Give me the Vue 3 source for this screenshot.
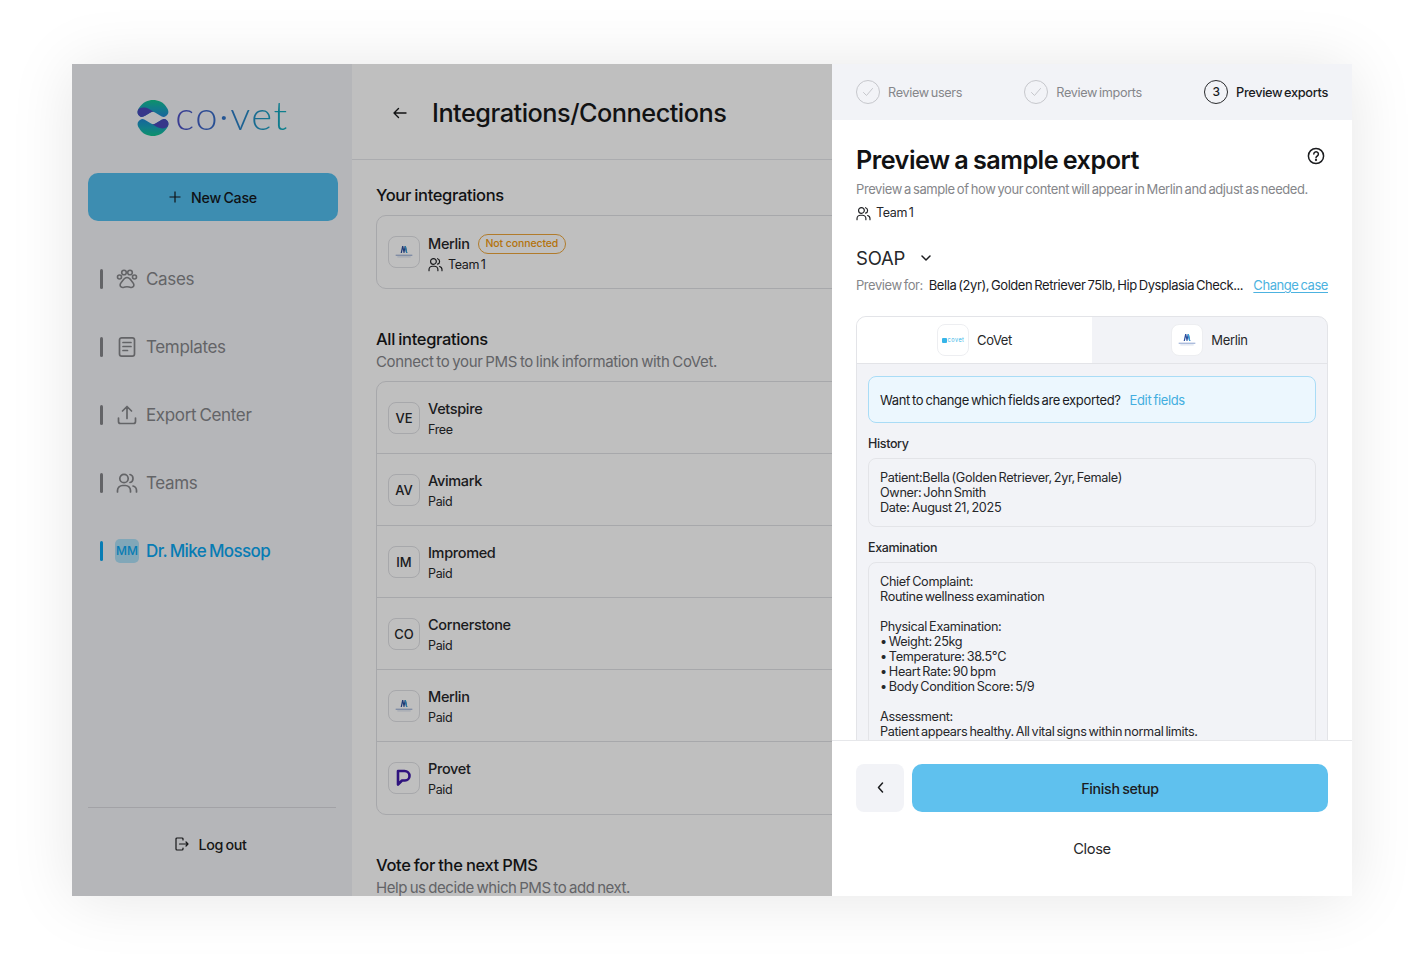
<script setup>
const nav = [
  { key: 'paw', label: 'Cases' },
  { key: 'doc', label: 'Templates' },
  { key: 'upload', label: 'Export Center' },
  { key: 'users', label: 'Teams' },
]
const rows = [
  { code: 'VE', name: 'Vetspire', plan: 'Free' },
  { code: 'AV', name: 'Avimark', plan: 'Paid' },
  { code: 'IM', name: 'Impromed', plan: 'Paid' },
  { code: 'CO', name: 'Cornerstone', plan: 'Paid' },
  { logo: 'merlin', name: 'Merlin', plan: 'Paid' },
  { logo: 'provet', name: 'Provet', plan: 'Paid' },
]
const lines1 = ['Patient:Bella (Golden Retriever, 2yr, Female)', 'Owner: John Smith', 'Date: August 21, 2025']
const lines2 = ['Chief Complaint:', 'Routine wellness examination', '\u00a0', 'Physical Examination:', '• Weight: 25kg', '• Temperature: 38.5°C', '• Heart Rate: 90 bpm', '• Body Condition Score: 5/9', '\u00a0', 'Assessment:', 'Patient appears healthy. All vital signs within normal limits.']
</script>

<template>
  <div class="page">
    <div class="frame">
      <aside class="side">
        <div class="logo">
          <svg width="32" height="36" viewBox="0 0 32 36">
            <defs>
              <linearGradient id="gTop" x1="0" y1="0" x2="0" y2="1">
                <stop offset="0" stop-color="#12c38e" />
                <stop offset="0.5" stop-color="#18a6b8" />
                <stop offset="1" stop-color="#1f86d0" />
              </linearGradient>
              <linearGradient id="gBot" x1="0" y1="1" x2="0" y2="0">
                <stop offset="0" stop-color="#12c38e" />
                <stop offset="0.5" stop-color="#18a6b8" />
                <stop offset="1" stop-color="#1f86d0" />
              </linearGradient>
            </defs>
            <path fill="url(#gTop)" d="M2 8C6 2 11 0 16 0C21 0 27 2 30 8C32 11 32 14 29 16C27 17.5 25 17 23 15.5L18 12.5C16.5 11.6 15 11.6 13.5 12.5L8.5 15.5C6 17 4 17.5 2.500 16C0 14 0 11 2 8Z" />
            <path fill="#4a48b8" d="M1 10C3 7 8 7 12 9L17 12C15.600 11.700 14.800 11.700 13.500 12.500L8.500 15.500C6 17 4 17.500 2.500 16C0.500 14.500 0 12 1 10Z" />
            <path fill="url(#gBot)" d="M30 28C26 34 21 36 16 36C11 36 5 34 2 28C0 25 0 22 3 20C5 18.500 7 19 9 20.500L14 23.500C15.500 24.400 17 24.400 18.500 23.500L23.500 20.500C26 19 28 18.500 29.500 20C32 22 32 25 30 28Z" />
            <path fill="#4a48b8" d="M31 26C29 29 24 29 20 27L15 24C16.400 24.300 17.200 24.300 18.500 23.500L23.500 20.500C26 19 28 18.500 29.500 20C31.500 21.500 32 24 31 26Z" />
          </svg>
          <span class="logo-text">co·vet</span>
        </div>
        <button class="new-case">
          <svg width="12" height="12" viewBox="0 0 12 12" fill="none" stroke="#14171c" stroke-width="1.200"><path d="M6 .5v11M.5 6h11" /></svg>
          <span>New Case</span>
        </button>
        <nav class="nav">
          <div v-for="item in nav" :key="item.key" class="nav-item">
            <i class="bar"></i>
            <svg v-if="item.key === 'paw'" class="nav-icon" viewBox="0 0 22 22" fill="none" stroke="currentColor" stroke-width="1.600">
              <circle cx="3.500" cy="9" r="2" /><circle cx="8" cy="4.500" r="2.300" /><circle cx="14" cy="4.500" r="2.300" /><circle cx="18.500" cy="9" r="2" />
              <path d="M11 9.500c-2.200 0-3.400 1.600-4.500 3.400-1 1.600-2.400 2.300-2.400 4 0 1.800 1.500 2.900 3.200 2.600 1.400-.2 2.400-.8 3.700-.8s2.300.6 3.700.8c1.700.3 3.200-.8 3.200-2.600 0-1.700-1.400-2.400-2.400-4-1.100-1.800-2.300-3.400-4.500-3.400z" />
            </svg>
            <svg v-else-if="item.key === 'doc'" class="nav-icon" viewBox="0 0 22 22" fill="none" stroke="currentColor" stroke-width="1.700" stroke-linecap="round">
              <rect x="3.500" y="1.800" width="15" height="18.400" rx="2.200" /><path d="M7 6.500h8M7 10.500h8M7 14.500h4.500" />
            </svg>
            <svg v-else-if="item.key === 'upload'" class="nav-icon" viewBox="0 0 22 22" fill="none" stroke="currentColor" stroke-width="1.700" stroke-linecap="round" stroke-linejoin="round">
              <path d="M11 14.500V2.500M6.500 7 11 2.500 15.500 7M2.500 14v3.500a2 2 0 0 0 2 2h13a2 2 0 0 0 2-2V14" />
            </svg>
            <svg v-else class="nav-icon" viewBox="0 0 22 22" fill="none" stroke="currentColor" stroke-width="1.700" stroke-linecap="round">
              <circle cx="8" cy="6.500" r="4.200" /><path d="M1.500 20v-1.500c0-3 2.500-5 5-5h3c2.500 0 5 2 5 5V20M14 2.500c2 .5 3 2.200 3 4s-1 3.500-3 4M17 14c2.200.6 3.500 2.400 3.500 4.500V20" />
            </svg>
            <span>{{ item.label }}</span>
          </div>
          <div class="nav-item active">
            <i class="bar"></i>
            <span class="avatar">MM</span>
            <span>Dr. Mike Mossop</span>
          </div>
        </nav>
        <div class="logout-wrap">
          <div class="logout">
            <svg width="14" height="14" viewBox="0 0 14 14" fill="none" stroke="#1d1e21" stroke-width="1.200" stroke-linecap="round" stroke-linejoin="round">
              <path d="M8 3V2a1 1 0 0 0-1-1H2a1 1 0 0 0-1 1v10a1 1 0 0 0 1 1h5a1 1 0 0 0 1-1v-1M4.500 7h8.500M11 5l2 2-2 2" />
            </svg>
            <span>Log out</span>
          </div>
        </div>
      </aside>

      <main class="main">
        <header class="main-head">
          <svg width="14" height="12" viewBox="0 0 14 12" fill="none" stroke="#17181a" stroke-width="1.400" stroke-linecap="round" stroke-linejoin="round"><path d="M13 6H1M5.500 1.500 1 6l4.500 4.500" /></svg>
          <h1>Integrations/Connections</h1>
        </header>
        <div class="main-body">
          <h2>Your integrations</h2>
          <div class="card your">
            <span class="tile">
              <svg class="merlin" viewBox="0 0 18 14"><path fill="#2c4f9e" d="M6 8 7.300 1.500h1.100L9 4.500l.6-3h1.100L12 8h-1.100l-.8-3.800L9.400 8H8.600l-.7-3.800L7.100 8z" /><path fill="#35a4dc" d="M9.600 1.500h1.100L12 8h-1.100z" /><rect x="1.500" y="9.500" width="15" height=".7" fill="#6a88c0" /><rect x="3" y="11.200" width="12" height=".5" fill="#b3c2dc" /></svg>
            </span>
            <div class="your-text">
              <div class="name-line"><span class="name">Merlin</span><span class="pill">Not connected</span></div>
              <div class="team-line">
                <svg width="15" height="15" viewBox="0 0 22 22" fill="none" stroke="#1e1f22" stroke-width="1.700" stroke-linecap="round"><circle cx="8" cy="6.500" r="4.200" /><path d="M1.500 20v-1.500c0-3 2.500-5 5-5h3c2.500 0 5 2 5 5V20M14 2.500c2 .5 3 2.200 3 4s-1 3.500-3 4M17 14c2.200.6 3.500 2.400 3.500 4.500V20" /></svg>
                <span>Team 1</span>
              </div>
            </div>
          </div>

          <h2 class="all">All integrations</h2>
          <p class="desc">Connect to your PMS to link information with CoVet.</p>
          <div class="card list">
            <div v-for="r in rows" :key="r.name" class="row">
              <span class="tile">
                <template v-if="r.code">{{ r.code }}</template>
                <svg v-else-if="r.logo === 'merlin'" class="merlin" viewBox="0 0 18 14"><path fill="#2c4f9e" d="M6 8 7.300 1.500h1.100L9 4.500l.6-3h1.100L12 8h-1.100l-.8-3.800L9.400 8H8.600l-.7-3.800L7.100 8z" /><path fill="#35a4dc" d="M9.600 1.500h1.100L12 8h-1.100z" /><rect x="1.500" y="9.500" width="15" height=".7" fill="#6a88c0" /><rect x="3" y="11.200" width="12" height=".5" fill="#b3c2dc" /></svg>
                <svg v-else width="16" height="18" viewBox="0 0 16 18" fill="none" stroke="#3f1aa8" stroke-width="2.600" stroke-linejoin="round"><path d="M2 15.500V2h6.500a5 5 0 0 1 5 5 4.500 4.500 0 0 1-4.500 4.500H6z" /></svg>
              </span>
              <div class="row-text">
                <div class="name">{{ r.name }}</div>
                <div class="plan">{{ r.plan }}</div>
              </div>
            </div>
          </div>

          <h2 class="vote">Vote for the next PMS</h2>
          <p class="desc help">Help us decide which PMS to add next.</p>
        </div>
      </main>

      <div class="scrim"></div>

      <section class="drawer">
        <div class="steps">
          <div class="step done">
            <svg width="24" height="24" viewBox="0 0 24 24" fill="none" stroke="#c6c7cc"><circle cx="12" cy="12" r="11.500" /><path d="m7.500 12.500 3 3 6-7" stroke-linecap="round" stroke-linejoin="round" /></svg>
            <span>Review users</span>
          </div>
          <div class="step done">
            <svg width="24" height="24" viewBox="0 0 24 24" fill="none" stroke="#c6c7cc"><circle cx="12" cy="12" r="11.500" /><path d="m7.500 12.500 3 3 6-7" stroke-linecap="round" stroke-linejoin="round" /></svg>
            <span>Review imports</span>
          </div>
          <div class="step current">
            <b class="num">3</b>
            <span>Preview exports</span>
          </div>
        </div>

        <div class="content">
          <div class="title-row">
            <h3>Preview a sample export</h3>
            <svg class="help-icon" width="18" height="18" viewBox="0 0 18 18" fill="none" stroke="#1b1c1f" stroke-width="1.500" stroke-linecap="round"><circle cx="9" cy="9" r="7.600" /><path d="M6.800 7a2.300 2.300 0 1 1 3.500 2c-.8.500-1.300.9-1.300 1.800" /><circle cx="9" cy="13" r=".4" /></svg>
          </div>
          <p class="sub">Preview a sample of how your content will appear in Merlin and adjust as needed.</p>
          <div class="team-line small">
            <svg width="15" height="15" viewBox="0 0 22 22" fill="none" stroke="#1e1f22" stroke-width="1.700" stroke-linecap="round"><circle cx="8" cy="6.500" r="4.200" /><path d="M1.500 20v-1.500c0-3 2.500-5 5-5h3c2.500 0 5 2 5 5V20M14 2.500c2 .5 3 2.200 3 4s-1 3.500-3 4M17 14c2.200.6 3.500 2.400 3.500 4.500V20" /></svg>
            <span>Team 1</span>
          </div>
          <div class="soap">
            <span>SOAP</span>
            <svg width="10" height="6" viewBox="0 0 10 6" fill="none" stroke="#1b1c1f" stroke-width="1.500" stroke-linecap="round" stroke-linejoin="round"><path d="m1 1 4 4 4-4" /></svg>
          </div>
          <div class="preview-for">
            <span class="pf-label">Preview for:</span>
            <span class="pf-case">Bella (2yr), Golden Retriever 75lb, Hip Dysplasia Check...</span>
            <a class="change">Change case</a>
          </div>

          <div class="panel">
            <div class="tabs">
              <div class="tab on">
                <span class="tab-logo"><i class="mini-sq"></i><span class="mini-txt">covet</span></span>
                <span>CoVet</span>
              </div>
              <div class="tab">
                <span class="tab-logo">
                  <svg class="merlin" viewBox="0 0 18 14"><path fill="#2c4f9e" d="M6 8 7.300 1.500h1.100L9 4.500l.6-3h1.100L12 8h-1.100l-.8-3.800L9.400 8H8.600l-.7-3.800L7.100 8z" /><path fill="#35a4dc" d="M9.600 1.500h1.100L12 8h-1.100z" /><rect x="1.500" y="9.500" width="15" height=".7" fill="#6a88c0" /><rect x="3" y="11.200" width="12" height=".5" fill="#b3c2dc" /></svg>
                </span>
                <span>Merlin</span>
              </div>
            </div>
            <div class="panel-body">
              <div class="callout">
                <span>Want to change which fields are exported?</span>
                <a>Edit fields</a>
              </div>
              <div class="sec-label">History</div>
              <div class="textbox">
                <div v-for="l in lines1" :key="l">{{ l }}</div>
              </div>
              <div class="sec-label">Examination</div>
              <div class="textbox">
                <div v-for="(l, i) in lines2" :key="i">{{ l }}</div>
              </div>
            </div>
          </div>
        </div>

        <footer class="foot">
          <div class="foot-btns">
            <button class="back">
              <svg width="7" height="11" viewBox="0 0 7 11" fill="none" stroke="#1b1c1f" stroke-width="1.500" stroke-linecap="round" stroke-linejoin="round"><path d="M5.500 1 1.500 5.500l4 4.500" /></svg>
            </button>
            <button class="finish">Finish setup</button>
          </div>
          <div class="close">Close</div>
        </footer>
      </section>
    </div>
  </div>
</template>

<style>
html, body { margin: 0; background: #fff; }
</style>

<style scoped>
.page {
  width: 1416px;
  height: 968px;
  padding: 64px 64px 72px 72px;
  box-sizing: border-box;
  background: #fff;
  font-family: Inter, "Noto Sans", sans-serif;
  letter-spacing: -0.35px;
  word-spacing: -1.2px;
  color: #1b1c1f;
}
.frame {
  position: relative;
  display: flex;
  width: 1280px;
  height: 832px;
  overflow: hidden;
  background: #fff;
}
.page::before {
  content: "";
  position: absolute;
  left: 72px;
  top: 64px;
  width: 1280px;
  height: 832px;
  box-shadow: 0 2px 60px rgba(0, 0, 0, .1);
}
.side {
  flex: 0 0 280px;
  display: flex;
  flex-direction: column;
  padding: 0 14px 0 16px;
  box-sizing: border-box;
  background: #f2f3f7;
}
.logo {
  display: flex;
  align-items: center;
  justify-content: center;
  gap: 6px;
  height: 36px;
  margin: 36px 0 37px 0;
  width: 250px;
}
.logo-text {
  font-family: Lato, sans-serif;
  font-weight: 300;
  font-size: 40px;
  line-height: 36px;
  letter-spacing: 1.500px;
  margin-top: -6px;
  background: linear-gradient(90deg, #504fc4, #2e74c6 45%, #11b0bc);
  -webkit-background-clip: text;
  background-clip: text;
  color: transparent;
}
.new-case {
  display: flex;
  align-items: center;
  justify-content: center;
  gap: 10px;
  width: 250px;
  height: 48px;
  border: 0;
  border-radius: 10px;
  background: #52bdec;
  font: 500 14.200px Inter, sans-serif;
  letter-spacing: -0.250px;
  word-spacing: -1px;
  color: #14171c;
}
.nav {
  display: flex;
  flex-direction: column;
  gap: 40px;
  margin-top: 44px;
  flex: 1;
}
.nav-item {
  display: flex;
  align-items: center;
  height: 28px;
  padding-left: 12px;
  font-size: 17px;
  color: #85868a;
}
.bar {
  width: 3px;
  height: 20px;
  border-radius: 2px;
  background: #85868a;
  margin-right: 13px;
}
.nav-icon {
  width: 22px;
  height: 22px;
  margin-right: 8px;
  flex: none;
}
.active { color: #0aa6f0; font-weight: 500; letter-spacing: -0.600px; }
.active .bar { background: #0aa6f0; }
.avatar {
  width: 24px;
  height: 24px;
  margin-right: 7px;
  margin-left: -1px;
  border-radius: 5px;
  background: #acdff6;
  font-size: 12px;
  letter-spacing: 0;
  line-height: 24px;
  text-align: center;
  font-weight: 500;
}
.logout-wrap {
  height: 89px;
  width: 248px;
  border-top: 1px solid #d8d9de;
  box-sizing: border-box;
  display: flex;
  justify-content: center;
  padding-top: 27px;
}
.logout {
  display: flex;
  align-items: center;
  gap: 9px;
  height: 18px;
  font-size: 14.300px;
  font-weight: 500;
  word-spacing: -1px;
  margin-left: -2px;
  color: #1d1e21;
}
.main { flex: 1; min-width: 0; background: #fff; }
.main-head {
  height: 96px;
  box-sizing: border-box;
  border-bottom: 1px solid #e5e6ea;
  display: flex;
  align-items: center;
  gap: 25px;
  padding: 2px 0 0 41px;
}
.main-head h1 {
  margin: 0;
  font-size: 25.300px;
  font-weight: 500;
  letter-spacing: -0.500px;
  color: #17181a;
}
.main-body { padding: 24px 0 0 24px; }
h2 {
  margin: 0;
  font-size: 16.500px;
  line-height: 22px;
  font-weight: 500;
  word-spacing: -0.700px;
  color: #17181a;
}
.card {
  width: 800px;
  border: 1px solid #dfe0e4;
  border-radius: 10px;
  box-sizing: border-box;
}
.your {
  display: flex;
  align-items: center;
  gap: 8px;
  height: 74px;
  margin-top: 9px;
  padding-left: 11px;
}
.your-text { padding-top: 3px; }
.tile {
  flex: none;
  width: 32px;
  height: 32px;
  display: flex;
  align-items: center;
  justify-content: center;
  border: 1px solid #dfe0e4;
  border-radius: 8px;
  box-sizing: border-box;
  font-size: 13px;
  font-weight: 500;
  letter-spacing: 0;
  color: #26272a;
}
.merlin { width: 20px; height: 16px; }
.name-line { display: flex; align-items: center; gap: 8px; }
.name { font-size: 14.500px; line-height: 20px; font-weight: 500; color: #26272a; }
.pill {
  height: 20px;
  line-height: 18px;
  padding: 0 7px;
  border: 1px solid #eca53a;
  border-radius: 11px;
  box-sizing: border-box;
  font-size: 10.500px;
  font-weight: 500;
  letter-spacing: -0.100px;
  word-spacing: 0;
  color: #f09a10;
}
.team-line {
  display: flex;
  align-items: center;
  gap: 5px;
  margin-top: 2px;
  font-size: 12.500px;
  line-height: 18px;
  word-spacing: -1.500px;
  color: #26272a;
}
.all { margin-top: 39px; }
.desc {
  margin: 1px 0 0;
  font-size: 15px;
  line-height: 22px;
  word-spacing: -1px;
  color: #84858a;
}
.list { margin-top: 8px; height: 434px; }
.row {
  display: flex;
  align-items: center;
  gap: 8px;
  height: 72px;
  padding-left: 11px;
  box-sizing: border-box;
  border-bottom: 1px solid #dfe0e4;
}
.row:last-child { border-bottom-color: transparent; }
.row-text { padding-top: 3px; }
.plan { font-size: 12.500px; line-height: 18px; margin-top: 2px; color: #26272a; }
.vote { margin-top: 39px; }
.help { margin-top: 1px; letter-spacing: -0.450px; }
.scrim {
  position: absolute;
  inset: 0;
  background: rgba(0, 0, 0, .25);
}
.drawer {
  position: absolute;
  top: 0;
  right: 0;
  bottom: 0;
  width: 520px;
  display: flex;
  flex-direction: column;
  background: #fff;
}
.steps {
  flex: 0 0 56px;
  display: flex;
  align-items: center;
  justify-content: space-between;
  padding: 0 24px;
  background: #f2f3f7;
}
.step {
  display: flex;
  align-items: center;
  gap: 8px;
  font-size: 12.700px;
  color: #85868a;
}
.current { color: #1b1c1f; font-weight: 500; font-size: 12.800px; }
.num {
  width: 24px;
  height: 24px;
  border: 1px solid #2a2b2e;
  border-radius: 50%;
  box-sizing: border-box;
  text-align: center;
  line-height: 22px;
  font-weight: 500;
  font-size: 12px;
}
.content {
  flex: 1;
  min-height: 0;
  overflow: hidden;
  padding: 24px 24px 0;
}
.title-row { display: flex; justify-content: space-between; }
.title-row h3 {
  margin: 0;
  font-size: 25.200px;
  line-height: 33px;
  font-weight: 600;
  letter-spacing: -0.500px;
  color: #111214;
}
.help-icon { margin: 3px 3px 0 0; }
.sub {
  margin: 2px 0 0;
  font-size: 13px;
  line-height: 20px;
  letter-spacing: -0.400px;
  white-space: nowrap;
  color: #85868a;
}
.small { margin-top: 5px; font-size: 12.500px; }
.soap {
  display: flex;
  align-items: center;
  gap: 16px;
  margin-top: 23px;
  height: 26px;
  font-size: 18.500px;
  letter-spacing: -0.200px;
  color: #26272a;
}
.preview-for {
  display: flex;
  align-items: center;
  margin-top: 4px;
  height: 20px;
  font-size: 13px;
  letter-spacing: -0.440px;
  white-space: nowrap;
}
.pf-label { color: #85868a; margin-right: 6px; }
.pf-case { color: #1b1c1f; flex: 1; }
.change { color: #4cb2e0; text-decoration: underline; text-underline-offset: 2px; }
.panel {
  margin-top: 21px;
  border: 1px solid #e3e4e8;
  border-radius: 10px 10px 0 0;
  overflow: hidden;
  background: #f2f3f7;
}
.tabs {
  display: flex;
  height: 47px;
  border-bottom: 1px solid #e3e4e8;
  box-sizing: border-box;
}
.tab {
  flex: 1;
  display: flex;
  align-items: center;
  justify-content: center;
  gap: 8px;
  font-size: 13px;
  color: #26272a;
}
.on { background: #fff; }
.tab-logo {
  width: 32px;
  height: 32px;
  display: flex;
  align-items: center;
  justify-content: center;
  gap: 1px;
  border: 1px solid #edeef1;
  border-radius: 8px;
  box-sizing: border-box;
  background: #fff;
}
.mini-sq {
  width: 5px;
  height: 5px;
  background: #36b5e8;
  border-radius: 1px;
}
.mini-txt {
  font-size: 5.500px;
  letter-spacing: .5px;
  color: #36b5e8;
}
.panel-body { padding: 12px 11px 0; }
.callout {
  height: 47px;
  display: flex;
  align-items: center;
  gap: 9px;
  padding: 0 11px;
  border: 1px solid #a9dcf6;
  border-radius: 8px;
  box-sizing: border-box;
  background: #ecf7fe;
  font-size: 13px;
  color: #1b1c1f;
}
.callout a { color: #43aee0; }
.sec-label {
  margin-top: 13px;
  height: 22px;
  line-height: 16px;
  font-size: 12.500px;
  font-weight: 500;
  color: #26272a;
}
.textbox {
  padding: 11px;
  border: 1px solid #e3e4e8;
  border-radius: 8px;
  font-size: 12.700px;
  line-height: 15px;
  color: #26272a;
}
.foot {
  flex: 0 0 156px;
  box-sizing: border-box;
  padding: 23px 24px 0;
  border-top: 1px solid #e6e7ea;
  background: #fff;
}
.foot-btns { display: flex; gap: 8px; }
.back {
  flex: 0 0 48px;
  height: 48px;
  border: 0;
  border-radius: 8px;
  background: #f2f3f7;
}
.finish {
  flex: 1;
  height: 48px;
  border: 0;
  border-radius: 10px;
  background: #5fc1ee;
  font: 500 14.200px Inter, sans-serif;
  letter-spacing: -0.300px;
  word-spacing: -1px;
  color: #1b1c1f;
}
.close {
  margin-top: 27px;
  text-align: center;
  font-size: 14.700px;
  line-height: 20px;
  color: #26272a;
}
</style>
